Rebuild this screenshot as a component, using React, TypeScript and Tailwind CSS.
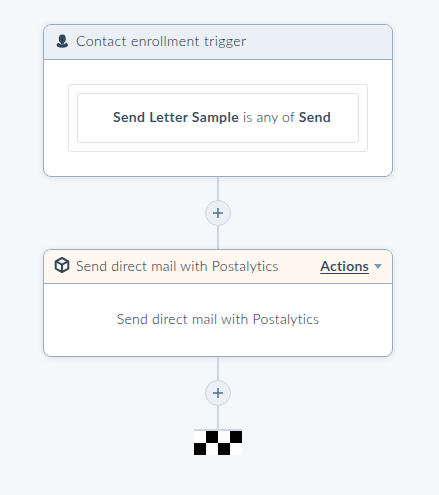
import React from 'react';

interface CardProps {
  title: string;
  icon: React.ReactNode;
  headerClass: string;
  titleClass: string;
  className: string;
  action?: React.ReactNode;
  children: React.ReactNode;
}

const ContactIcon: React.FC = () => (
  <svg className="ml-0.5 mb-0.5 w-[14px] h-[14px] shrink-0" viewBox="0 0 14 14" fill="#33475b">
    <ellipse cx="6.3" cy="4.800" rx="3.500" ry="4.300" />
    <path d="M4.800 7.500h3v2.600h-3z" />
    <path d="M2.700 8.800C1.400 9.200.6 10 .6 11.100c0 1.700 2.400 2.700 5.700 2.700s5.700-1 5.700-2.700c0-1.100-.8-1.900-2.100-2.300-.7 1-2 1.500-3.600 1.500s-2.900-.5-3.600-1.500z" />
  </svg>
);

const BoxIcon: React.FC = () => (
  <svg className="mb-[3px] w-[16px] h-[18px] shrink-0" viewBox="0 0 16 18" fill="none" stroke="#33475b" strokeWidth="2" strokeLinejoin="round">
    <path d="M8 2l6.300 3.300v7.300L8 16.100l-6.300-3.500V5.300z" />
    <path d="M2 5.400l6 3.200 6-3.200M8 8.600V16" />
  </svg>
);

const Card: React.FC<CardProps> = ({ title, icon, headerClass, titleClass, className, action, children }) => (
  <section className={`w-[350px] flex flex-col rounded-lg border border-[#99acc2] bg-white overflow-hidden shadow-[0_1px_6px_rgba(45,62,80,0.12)] ${className}`}>
    <header className={`flex items-center border-b border-[#99acc2] px-2.5 shrink-0 ${headerClass}`}>
      <div className="w-[22px] flex items-center">{icon}</div>
      <h2 className={`pb-0.5 font-light text-[#16283a] whitespace-nowrap ${titleClass}`}>{title}</h2>
      {action}
    </header>
    {children}
  </section>
);

const Connector: React.FC = () => <div className="w-0.5 h-[23px] bg-[#cbd6e2]" />;

const AddButton: React.FC = () => (
  <button className="size-[26px] rounded-full border border-[#cbd6e2] bg-[#eaf0f6] flex items-center justify-center" aria-label="Add">
    <svg className="size-[10px]" viewBox="0 0 10 10" stroke="#506e91" strokeWidth="1.500">
      <path d="M5 0v10M0 5h10" />
    </svg>
  </button>
);

const App: React.FC = () => {
  return (
    <main className="min-h-screen bg-[#f5f8fa] pt-6 pl-[43px] font-['Lato',sans-serif] text-[14px] leading-5 text-[#33475b]">
      <div className="w-[350px] flex flex-col items-center">
        <Card
          title="Contact enrollment trigger"
          icon={<ContactIcon />}
          headerClass="h-[35px] bg-[#eaf0f6]"
          titleClass="tracking-[0.43px]"
          className="h-[153px]"
        >
          <div className="flex-1 p-6">
            <div className="h-[68px] rounded-[3px] border border-[#dfe3eb] p-2">
              <div className="h-[50px] rounded-[3px] border border-[#dfe3eb] pl-2 pb-0.5 flex items-center justify-center">
                <p className="font-light text-[#16283a] tracking-[0.2px] whitespace-nowrap">
                  <span className="font-semibold text-[#33475b] tracking-[0.36px]">Send Letter Sample</span> is any of{' '}
                  <span className="font-semibold text-[#33475b] tracking-[0.36px]">Send</span>
                </p>
              </div>
            </div>
          </div>
        </Card>

        <Connector />
        <AddButton />
        <Connector />

        <Card
          title="Send direct mail with Postalytics"
          icon={<BoxIcon />}
          headerClass="h-[34px] bg-[#fef8f0]"
          titleClass="tracking-[0.28px]"
          className="h-[108px]"
          action={
            <button className="ml-auto flex items-center gap-[5px] pb-0.5">
              <span className="font-semibold tracking-[0.3px] underline underline-offset-2">Actions</span>
              <span className="mt-0.5 border-x-[4.5px] border-x-transparent border-t-[5px] border-t-[#7c98b6]" />
            </button>
          }
        >
          <p className="flex-1 pb-0.5 flex items-center justify-center font-light text-[#16283a] tracking-[0.28px]">
            Send direct mail with Postalytics
          </p>
        </Card>

        <Connector />
        <AddButton />
        <Connector />

        <div className="w-12 border-t-2 border-[#cbd6e2]">
          <div className="grid grid-cols-4">
            {[0, 1, 0, 1, 1, 0, 1, 0].map((dark, i) => (
              <div key={i} className={`size-3 ${dark ? 'bg-black' : 'bg-white'}`} />
            ))}
          </div>
        </div>
      </div>
    </main>
  );
};

export default App;
